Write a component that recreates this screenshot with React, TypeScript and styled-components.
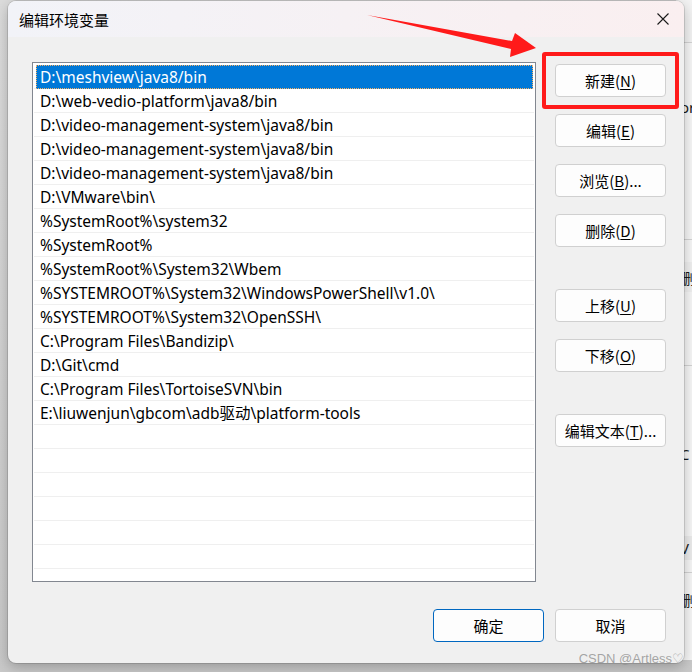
import React from "react";
import styled, { createGlobalStyle } from "styled-components";

const Global = createGlobalStyle`
  html, body { margin: 0; padding: 0; }
  body { font-family: "Noto Sans", "Noto Sans CJK SC", sans-serif; overflow: hidden; }
`;

const FONT = `"Noto Sans", "Noto Sans CJK SC", sans-serif`;

const Desktop = styled.div`
  position: relative;
  width: 692px;
  height: 672px;
  overflow: hidden;
  background: linear-gradient(180deg, #dcdcdc 0%, #c9c9c9 100%);
`;

const BackWindow = styled.div`
  position: absolute;
  left: 676px;
  top: 0;
  width: 60px;
  height: 660px;
  background: #f7f7f7;
  display: flex;
  flex-direction: column;
  font-family: ${FONT};
  font-size: 15px;
  color: #1a1a1a;
`;

const BackRow = styled.div<{ $h: number; $line?: boolean; $bg?: string }>`
  height: ${(p) => p.$h}px;
  flex: none;
  box-sizing: border-box;
  border-bottom: ${(p) => (p.$line ? "1px solid #d4d4d4" : "none")};
  background: ${(p) => p.$bg || "transparent"};
  display: flex;
  align-items: center;
  padding-left: 4px;
  white-space: nowrap;
  overflow: hidden;
`;

const Dialog = styled.div`
  position: absolute;
  left: 8px;
  top: 1px;
  width: 676px;
  height: 662px;
  border-radius: 8px;
  overflow: hidden;
  background: #f0f0f0;
  box-shadow: 0 0 0 1px rgba(0, 0, 0, 0.12), 0 4px 14px rgba(0, 0, 0, 0.25);
  display: flex;
  flex-direction: column;
  font-family: ${FONT};
`;

const TitleBar = styled.div`
  height: 36px;
  flex: none;
  display: flex;
  align-items: center;
  justify-content: space-between;
  padding: 0 9px 0 11px;
  background: linear-gradient(90deg, #f2f3f8 0%, #f6f1f4 50%, #faeff0 100%);
`;

const Title = styled.span`
  font-size: 15px;
  color: #000;
  font-family: "Noto Sans CJK SC", sans-serif;
`;

const CloseBtn = styled.div`
  width: 24px;
  height: 24px;
  display: flex;
  align-items: center;
  justify-content: center;
`;

const Body = styled.div`
  flex: 1;
  display: flex;
  flex-direction: column;
  padding: 25px 18px 21px 24px;
`;

const Main = styled.div`
  display: flex;
  gap: 19px;
  align-items: flex-start;
`;

const ListBox = styled.div`
  width: 504px;
  height: 520px;
  box-sizing: border-box;
  border: 1px solid #828790;
  background: #fff;
  padding: 2px 1px 0 1px;
  overflow: hidden;
`;

const Row = styled.div<{ $sel?: boolean }>`
  height: 24px;
  box-sizing: border-box;
  border-bottom: 1px solid #efefef;
  display: flex;
  align-items: center;
  padding-left: ${(p) => (p.$sel ? "2px" : "6px")};
  font-size: 15.5px;
  color: #000;
  white-space: nowrap;
`;

const SelFill = styled.div`
  flex: 1;
  height: 24px;
  margin-top: 1px;
  background: #0078d7;
  color: #fff;
  display: flex;
  align-items: center;
  padding-left: 4px;
  margin-right: 1px;
  outline: 1px dotted #f7b064;
  outline-offset: -1px;
`;

const Side = styled.div`
  display: flex;
  flex-direction: column;
  margin-top: 2px;
`;

const Btn = styled.div<{ $mt?: number; $primary?: boolean }>`
  width: 111px;
  height: 33px;
  box-sizing: border-box;
  margin-top: ${(p) => p.$mt ?? 0}px;
  border: 1px solid ${(p) => (p.$primary ? "#0067c0" : "#d0d0d0")};
  border-radius: 4px;
  background: #fdfdfd;
  display: flex;
  align-items: center;
  justify-content: center;
  font-size: 15px;
  color: #000;
  font-family: "Noto Sans CJK SC", "Noto Sans", sans-serif;
  white-space: nowrap;
  u { text-underline-offset: 2px; }
`;

const Footer = styled.div`
  margin-top: auto;
  display: flex;
  justify-content: flex-end;
  gap: 11px;
`;

const Highlight = styled.div`
  position: absolute;
  left: 542px;
  top: 52px;
  width: 137px;
  height: 57px;
  box-sizing: border-box;
  border: 4px solid #ff1a1a;
  border-radius: 3px;
`;

const ArrowSvg = styled.svg`
  position: absolute;
  left: 360px;
  top: 8px;
`;

const Watermark = styled.div`
  position: absolute;
  right: 8px;
  bottom: 6px;
  font-family: "Liberation Sans", Arial, sans-serif;
  font-size: 13px;
  color: rgba(150, 150, 150, 0.85);
  white-space: nowrap;
`;

const paths = [
  "D:\\meshview\\java8/bin",
  "D:\\web-vedio-platform\\java8/bin",
  "D:\\video-management-system\\java8/bin",
  "D:\\video-management-system\\java8/bin",
  "D:\\video-management-system\\java8/bin",
  "D:\\VMware\\bin\\",
  "%SystemRoot%\\system32",
  "%SystemRoot%",
  "%SystemRoot%\\System32\\Wbem",
  "%SYSTEMROOT%\\System32\\WindowsPowerShell\\v1.0\\",
  "%SYSTEMROOT%\\System32\\OpenSSH\\",
  "C:\\Program Files\\Bandizip\\",
  "D:\\Git\\cmd",
  "C:\\Program Files\\TortoiseSVN\\bin",
  "E:\\liuwenjun\\gbcom\\adb驱动\\platform-tools",
];

const TOTAL_ROWS = 22;

const buttons: { label: string; key: string; suffix?: string; mt: number }[] = [
  { label: "新建", key: "N", mt: 0 },
  { label: "编辑", key: "E", mt: 17 },
  { label: "浏览", key: "B", suffix: "...", mt: 17 },
  { label: "删除", key: "D", mt: 17 },
  { label: "上移", key: "U", mt: 42 },
  { label: "下移", key: "O", mt: 17 },
  { label: "编辑文本", key: "T", suffix: "...", mt: 42 },
];

export default function App() {
  const rows = Array.from({ length: TOTAL_ROWS }, (_, i) => paths[i] ?? "");
  return (
    <Desktop>
      <Global />
      <BackWindow>
        <BackRow $h={43} $line $bg="#f3f3f3" />
        <BackRow $h={50} />
        <BackRow $h={28}>or</BackRow>
        <BackRow $h={119} $line />
        <BackRow $h={22} />
        <BackRow $h={30} $bg="#f0f0f0">删</BackRow>
        <BackRow $h={74} $line />
        <BackRow $h={77} />
        <BackRow $h={22}>C</BackRow>
        <BackRow $h={71} />
        <BackRow $h={24} $bg="#ececec">V</BackRow>
        <BackRow $h={13} $line />
        <BackRow $h={11} />
        <BackRow $h={30}>删</BackRow>
      </BackWindow>
      <Dialog>
        <TitleBar>
          <Title>编辑环境变量</Title>
          <CloseBtn>
            <svg width="14" height="14" viewBox="0 0 14 14">
              <path d="M1.5 1.5 L12.5 12.5 M12.5 1.5 L1.5 12.5" stroke="#1a1a1a" strokeWidth="1.1" />
            </svg>
          </CloseBtn>
        </TitleBar>
        <Body>
          <Main>
            <ListBox>
              {rows.map((p, i) =>
                i === 0 ? (
                  <Row key={i} $sel>
                    <SelFill>{p}</SelFill>
                  </Row>
                ) : (
                  <Row key={i}>{p}</Row>
                )
              )}
            </ListBox>
            <Side>
              {buttons.map((b) => (
                <Btn key={b.label} $mt={b.mt}>
                  {b.label}(<u>{b.key}</u>){b.suffix ?? ""}
                </Btn>
              ))}
            </Side>
          </Main>
          <Footer>
            <Btn $primary>确定</Btn>
            <Btn>取消</Btn>
          </Footer>
        </Body>
      </Dialog>
      <Highlight />
      <ArrowSvg width="185" height="60" viewBox="0 0 185 60">
        <polygon points="7,7 152,33 155,25 176,40 150,49 151,41" fill="#ff1a1a" />
      </ArrowSvg>
      <Watermark>CSDN @Artless♡</Watermark>
    </Desktop>
  );
}
